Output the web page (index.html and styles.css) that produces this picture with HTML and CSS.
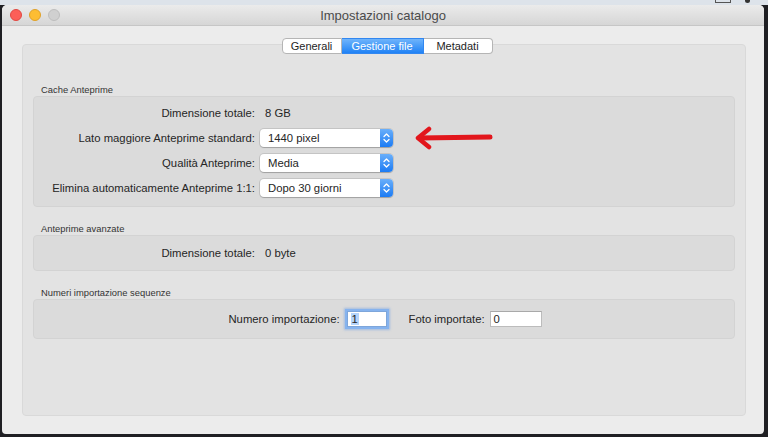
FILE: index.html
```html
<!DOCTYPE html>
<html>
<head>
    <title>Impostazioni catalogo</title>
    <link rel="stylesheet" href="styles.css">
</head>
<body>
    <div class="menubar">
        <span class="mb-box"></span>
        <span class="mb-drop"></span>
    </div>
    <div class="window">
        <div class="titlebar">
            <div class="lights">
                <span class="light red"></span>
                <span class="light yellow"></span>
                <span class="light grey"></span>
            </div>
            <div class="title">Impostazioni catalogo</div>
        </div>
        <div class="content">
            <div class="tabs">
                <div class="seg first">Generali</div>
                <div class="seg active">Gestione file</div>
                <div class="seg last">Metadati</div>
            </div>
            <div class="panel">
                <div class="section">
                    <div class="section-label">Cache Anteprime</div>
                    <div class="group form">
                        <div class="label">Dimensione totale:</div>
                        <div class="value">8 GB</div>

                        <div class="label">Lato maggiore Anteprime standard:</div>
                        <div class="control">
                            <div class="select">
                                <span class="select-text">1440 pixel</span>
                                <span class="stepper">
                                    <svg width="13" height="18" viewBox="0 0 13 18"><path d="M4 7.5 L6.5 5 L9 7.5 M4 10.5 L6.5 13 L9 10.5" fill="none" stroke="#fff" stroke-width="1.3" stroke-linecap="round" stroke-linejoin="round"/></svg>
                                </span>
                            </div>
                            <svg class="arrow" width="80" height="24" viewBox="0 0 80 24"><path d="M5 12 L76 11" fill="none" stroke="#e2161c" stroke-width="5" stroke-linecap="round"/><path d="M15 3 L4 12 L15 21" fill="none" stroke="#e2161c" stroke-width="4.5" stroke-linecap="round" stroke-linejoin="round"/></svg>
                        </div>

                        <div class="label">Qualità Anteprime:</div>
                        <div class="control">
                            <div class="select">
                                <span class="select-text">Media</span>
                                <span class="stepper">
                                    <svg width="13" height="18" viewBox="0 0 13 18"><path d="M4 7.5 L6.5 5 L9 7.5 M4 10.5 L6.5 13 L9 10.5" fill="none" stroke="#fff" stroke-width="1.3" stroke-linecap="round" stroke-linejoin="round"/></svg>
                                </span>
                            </div>
                        </div>

                        <div class="label">Elimina automaticamente Anteprime 1:1:</div>
                        <div class="control">
                            <div class="select">
                                <span class="select-text">Dopo 30 giorni</span>
                                <span class="stepper">
                                    <svg width="13" height="18" viewBox="0 0 13 18"><path d="M4 7.5 L6.5 5 L9 7.5 M4 10.5 L6.5 13 L9 10.5" fill="none" stroke="#fff" stroke-width="1.3" stroke-linecap="round" stroke-linejoin="round"/></svg>
                                </span>
                            </div>
                        </div>
                    </div>
                </div>

                <div class="section">
                    <div class="section-label">Anteprime avanzate</div>
                    <div class="group form single">
                        <div class="label">Dimensione totale:</div>
                        <div class="value">0 byte</div>
                    </div>
                </div>

                <div class="section">
                    <div class="section-label">Numeri importazione sequenze</div>
                    <div class="group inline">
                        <span class="label">Numero importazione:</span>
                        <div class="field focus small"><span class="selected">1</span></div>
                        <span class="label second">Foto importate:</span>
                        <div class="field wide">0</div>
                    </div>
                </div>
            </div>
        </div>
    </div>
</body>
</html>
```

FILE: styles.css
```css
body {
    margin: 0;
    width: 768px;
    height: 437px;
    overflow: hidden;
    background-color: #1f1f23;
    font-family: "Liberation Sans", Arial, sans-serif;
    color: #262626;
}

/* barra dei menu in alto */
.menubar {
    height: 5px;
    background-color: #dde3ea;
    display: flex;
    justify-content: flex-end;
    align-items: flex-start;
    gap: 14px;
    padding-right: 18px;
}
.mb-box {
    width: 14px;
    height: 2px;
    border: 1px solid #555;
    border-top: none;
}
.mb-drop {
    width: 5px;
    height: 3px;
    background-color: #333;
    border-radius: 0 0 3px 3px;
}

.window {
    margin: 0 4px 0 2px;
    height: 429px;
    background-color: #ececec;
    border-radius: 5px 5px 4px 4px;
    display: flex;
    flex-direction: column;
    overflow: hidden;
}

.titlebar {
    height: 20px;
    border-bottom: 1px solid #c6c6c6;
    background: linear-gradient(#ebebeb, #d6d6d6);
    display: grid;
    grid-template-columns: 1fr auto 1fr;
    align-items: center;
}
.lights {
    display: flex;
    gap: 7px;
    padding-left: 8px;
}
.light {
    width: 12px;
    height: 12px;
    border-radius: 50%;
    box-sizing: border-box;
}
.light.red { background-color: #fc5f58; border: 1px solid #e04842; }
.light.yellow { background-color: #fdbd33; border: 1px solid #dfa028; }
.light.grey { background-color: #d0d0d0; border: 1px solid #bdbdbd; }
.title {
    font-size: 13px;
    color: #4b4b4b;
}

.content {
    flex: 1;
    padding: 12px 18px 18px 20px;
    display: flex;
    flex-direction: column;
}

/* controllo segmentato */
.tabs {
    display: flex;
    justify-content: center;
    padding-left: 6px;
    margin-bottom: -10px;
    position: relative;
    z-index: 1;
}
.seg {
    height: 16px;
    line-height: 14px;
    font-size: 11px;
    text-align: center;
    background-color: #fff;
    border: 1px solid #b5b5b5;
    box-sizing: border-box;
    color: #1e1e1e;
}
.seg + .seg { border-left: none; }
.seg.first { width: 60px; border-radius: 4px 0 0 4px; }
.seg.active {
    width: 82px;
    color: #fff;
    background: linear-gradient(#6fb4fb, #2082f5);
    border-color: #3287f0;
}
.seg.last { width: 69px; border-radius: 0 4px 4px 0; }

.panel {
    flex: 1;
    background-color: #e3e3e3;
    border: 1px solid #d9d9d9;
    border-radius: 4px;
    padding: 39px 10px 0 10px;
}

.section + .section { margin-top: 16px; }
.section-label {
    font-size: 9.4px;
    line-height: 12px;
    color: #333;
    padding-left: 8px;
}

.group {
    background-color: #dbdbdb;
    border: 1px solid #d3d3d3;
    border-radius: 4px;
}

.form {
    display: grid;
    grid-template-columns: 221px auto;
    column-gap: 5px;
    row-gap: 7px;
    align-items: center;
    padding: 7px 0 9px;
}
.form.single { padding: 8px 0; }

.label {
    font-size: 11.3px;
    text-align: right;
    line-height: 18px;
}
.value {
    font-size: 11.3px;
    line-height: 18px;
    padding-left: 5px;
}

.control {
    display: flex;
    align-items: center;
    gap: 21px;
    height: 18px;
}
.select {
    display: flex;
    width: 133px;
    height: 18px;
    background-color: #fff;
    border-radius: 4px;
    box-shadow: 0 0 0 1px rgba(0, 0, 0, 0.1), 0 1px 1px rgba(0, 0, 0, 0.18);
}
.select-text {
    flex: 1;
    font-size: 11.3px;
    line-height: 18px;
    padding-left: 8px;
}
.stepper {
    width: 13px;
    height: 18px;
    border-radius: 0 4px 4px 0;
    background: linear-gradient(#6aaffa, #1b7bf4);
}
.stepper svg { display: block; }
.arrow {
    display: block;
    margin: -3px 0;
}

/* riga dei numeri di importazione */
.inline {
    display: flex;
    justify-content: center;
    align-items: center;
    padding: 9px 0 9px 2px;
}
.inline .label { line-height: 20px; }
.inline .second { margin-left: 22px; }
.field {
    height: 16px;
    box-sizing: border-box;
    background-color: #fff;
    border: 1px solid #bcbcbc;
    border-top-color: #a9a9a9;
    font-size: 11.3px;
    line-height: 14px;
    padding-left: 3px;
    margin-left: 5px;
}
.field.small { width: 40px; margin-left: 7px; }
.field.wide { width: 52px; }
.field.focus {
    border-color: #7ea6da;
    box-shadow: 0 0 0 2px #86b3ee, 0 0 2px 3px rgba(110, 160, 230, 0.5);
}
.selected {
    background-color: #b4d4fb;
    padding: 0 1px;
}
```
